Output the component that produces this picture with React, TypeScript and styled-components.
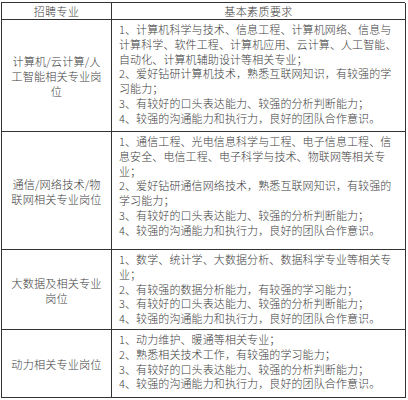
import React from "react";
import styled, { createGlobalStyle } from "styled-components";

const GlobalStyle = createGlobalStyle`
  html, body {
    margin: 0;
    padding: 0;
    background: #ffffff;
  }
  body {
    font-family: "Noto Sans CJK SC", "Noto Sans", sans-serif;
  }
`;

type Row = {
  title: string[];
  lines: string[];
  height: number;
};

const ROWS: Row[] = [
  {
    title: ["计算机/云计算/人", "工智能相关专业岗", "位"],
    height: 112,
    lines: [
      "1、计算机科学与技术、信息工程、计算机网络、信息与",
      "计算科学、软件工程、计算机应用、云计算、人工智能、",
      "自动化、计算机辅助设计等相关专业；",
      "2、爱好钻研计算机技术，熟悉互联网知识，有较强的学",
      "习能力；",
      "3、有较好的口头表达能力、较强的分析判断能力；",
      "4、较强的沟通能力和执行力，良好的团队合作意识。",
    ],
  },
  {
    title: ["通信/网络技术/物", "联网相关专业岗位"],
    height: 118,
    lines: [
      "1、通信工程、光电信息科学与工程、电子信息工程、信",
      "息安全、电信工程、电子科学与技术、物联网等相关专",
      "业；",
      "2、爱好钻研通信网络技术，熟悉互联网知识，有较强的",
      "学习能力；",
      "3、有较好的口头表达能力、较强的分析判断能力；",
      "4、较强的沟通能力和执行力，良好的团队合作意识。",
    ],
  },
  {
    title: ["大数据及相关专业", "岗位"],
    height: 80,
    lines: [
      "1、数学、统计学、大数据分析、数据科学专业等相关专",
      "业；",
      "2、有较强的数据分析能力，有较强的学习能力；",
      "3、有较好的口头表达能力、较强的分析判断能力；",
      "4、较强的沟通能力和执行力，良好的团队合作意识。",
    ],
  },
  {
    title: ["动力相关专业岗位"],
    height: 68,
    lines: [
      "1、动力维护、暖通等相关专业；",
      "2、熟悉相关技术工作，有较强的学习能力；",
      "3、有较好的口头表达能力、较强的分析判断能力；",
      "4、较强的沟通能力和执行力，良好的团队合作意识。",
    ],
  },
];

const Page = styled.div`
  padding: 2px 0 0 1px;
`;

const Table = styled.div<{ rows: string }>`
  display: grid;
  grid-template-columns: 110px 294px;
  grid-template-rows: ${({ rows }) => rows};
  width: 404px;
  box-sizing: border-box;
  border-top: 1px solid #333333;
  border-left: 1px solid #333333;
  color: #404040;
  font-size: 11px;
  font-weight: 300;
`;

const Cell = styled.div`
  box-sizing: border-box;
  border-right: 1px solid #333333;
  border-bottom: 1px solid #333333;
  overflow: hidden;
`;

const HeadCell = styled(Cell)`
  display: flex;
  align-items: center;
  justify-content: center;
  line-height: 16px;
  letter-spacing: 0.4px;
`;

const TitleCell = styled(Cell)`
  display: flex;
  flex-direction: column;
  align-items: center;
  justify-content: center;
  padding-top: 2px;
  line-height: 15px;
  font-size: 11.2px;
`;

const BodyCell = styled(Cell)`
  display: flex;
  flex-direction: column;
  padding: 2px 0 0 7px;
  line-height: 14.8px;
`;

const Line = styled.div`
  white-space: nowrap;
  letter-spacing: 0.1px;
`;

const App = () => {
  const rows = ["17px", ...ROWS.map((r) => `${r.height}px`)].join(" ");
  return (
    <Page>
      <GlobalStyle />
      <Table rows={rows}>
        <HeadCell>招聘专业</HeadCell>
        <HeadCell>基本素质要求</HeadCell>
        {ROWS.map((row) => (
          <React.Fragment key={row.title.join("")}>
            <TitleCell>
              {row.title.map((t) => (
                <Line key={t}>{t}</Line>
              ))}
            </TitleCell>
            <BodyCell>
              {row.lines.map((l) => (
                <Line key={l}>{l}</Line>
              ))}
            </BodyCell>
          </React.Fragment>
        ))}
      </Table>
    </Page>
  );
};

export default App;
